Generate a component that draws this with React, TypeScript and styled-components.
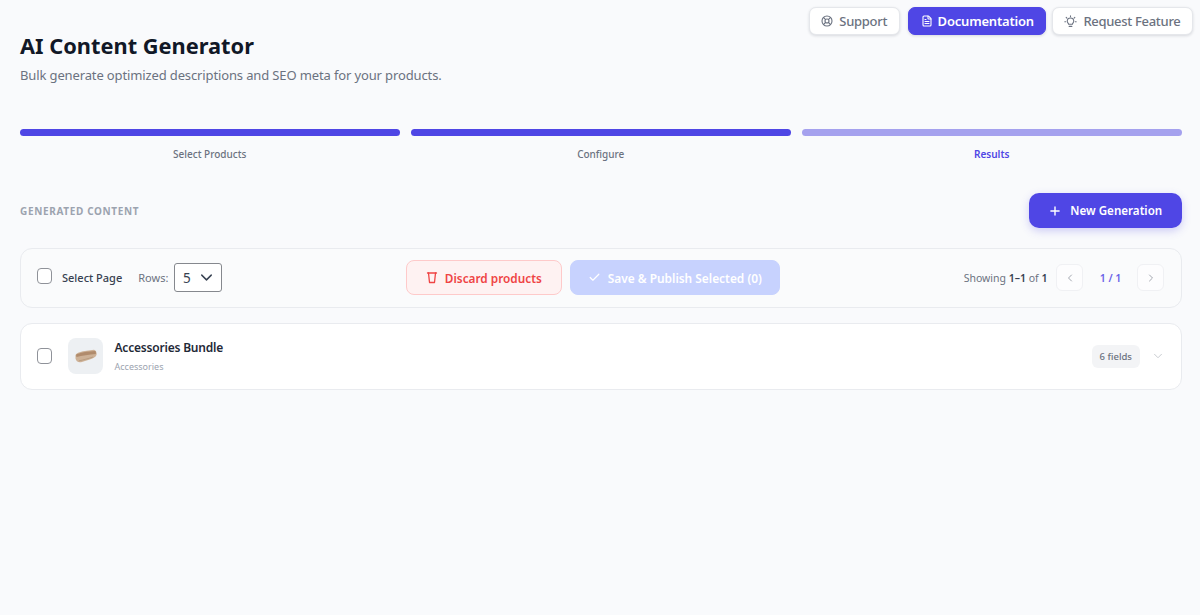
import styled, { createGlobalStyle } from 'styled-components';
import { Check, ChevronDown, ChevronLeft, ChevronRight, FileText, LifeBuoy, Plus } from 'lucide-react';

const STEPS = [
  { label: 'Select Products', state: 'done' },
  { label: 'Configure', state: 'done' },
  { label: 'Results', state: 'current' },
];

const GlobalStyle = createGlobalStyle`
  html, body {
    margin: 0;
    padding: 0;
    background: #f9fafc;
    font-family: "Noto Sans", "Open Sans", sans-serif;
    color: #111827;
  }
  * {
    box-sizing: border-box;
  }
`;

const BulbIcon = () => (
  <svg width="13" height="13" viewBox="0 0 24 24" fill="none" stroke="currentColor" strokeWidth="2" strokeLinecap="round">
    <path d="M12 1.500v1.500M4 4.500l1.400 1.400M20 4.500l-1.400 1.400M1.500 12.500H3M21 12.500h1.500" />
    <path d="M8.500 17c0-1.600-2.500-2.600-2.500-5.500a6 6 0 0 1 12 0c0 2.900-2.500 3.900-2.500 5.500z" />
    <path d="M9.500 21h5" />
  </svg>
);

const BinIcon = () => (
  <svg width="12" height="13" viewBox="0 0 24 26" fill="none" stroke="currentColor" strokeWidth="2.600" strokeLinecap="round" strokeLinejoin="round">
    <path d="M3 4h18" />
    <path d="M5 4l2 19h10l2-19" />
  </svg>
);

const ProductPhoto = () => (
  <svg width="22" height="14" viewBox="0 0 22 14">
    <path d="M0.500 6 C1.500 4 4 3 8 2.200 L19 0.800 C21 1.500 22 3.500 21.500 6 C20.500 8.500 18 9.500 14 10.800 L6 13.200 C3 13.800 1 12 0.500 9.500z" fill="#cdb196" />
    <path d="M1 5.800 C4 3.800 12 2.400 20.500 2 C21 3 21 4 20.800 5 C14 5.500 7 6.500 1.500 8z" fill="#b08b6c" />
    <path d="M4 11.800 C8 11 13 9.800 18 8" stroke="#b79a7e" strokeWidth="0.900" fill="none" />
  </svg>
);

export default function App() {
  return (
    <Page>
      <GlobalStyle />
      <Header>
        <TitleBlock>
          <Title>AI Content Generator</Title>
          <Subtitle>Bulk generate optimized descriptions and SEO meta for your products.</Subtitle>
        </TitleBlock>
        <TopActions>
          <TopButton>
            <LifeBuoy size={12} strokeWidth={2.200} />
            Support
          </TopButton>
          <TopButton $primary>
            <FileText size={12} strokeWidth={2.200} />
            Documentation
          </TopButton>
          <TopButton>
            <BulbIcon />
            Request Feature
          </TopButton>
        </TopActions>
      </Header>

      <Stepper>
        {STEPS.map((step) => (
          <Step key={step.label}>
            <StepBar $current={step.state === 'current'} />
            <StepLabel $current={step.state === 'current'}>{step.label}</StepLabel>
          </Step>
        ))}
      </Stepper>

      <SectionHeader>
        <SectionTitle>GENERATED CONTENT</SectionTitle>
        <NewButton>
          <Plus size={14} strokeWidth={2.400} />
          New Generation
        </NewButton>
      </SectionHeader>

      <Toolbar>
        <ToolbarGroup>
          <PageCheckbox />
          <SelectPage>Select Page</SelectPage>
          <RowsLabel>Rows:</RowsLabel>
          <RowsSelect>
            5
            <ChevronDown size={19} strokeWidth={1.800} />
          </RowsSelect>
        </ToolbarGroup>
        <ToolbarActions>
          <DiscardButton>
            <BinIcon />
            Discard products
          </DiscardButton>
          <SaveButton>
            <Check size={13} strokeWidth={2.200} />
            Save &amp; Publish Selected (0)
          </SaveButton>
        </ToolbarActions>
        <ToolbarGroup>
          <Showing>
            Showing <b>1–1</b> of <b>1</b>
          </Showing>
          <PageButton>
            <ChevronLeft size={12} />
          </PageButton>
          <PageNumber>1 / 1</PageNumber>
          <PageButton>
            <ChevronRight size={12} />
          </PageButton>
        </ToolbarGroup>
      </Toolbar>

      <ProductCard>
        <Checkbox />
        <Thumb>
          <ProductPhoto />
        </Thumb>
        <ProductInfo>
          <ProductName>Accessories Bundle</ProductName>
          <ProductCategory>Accessories</ProductCategory>
        </ProductInfo>
        <FieldsBadge>6 fields</FieldsBadge>
        <Expand>
          <ChevronDown size={14} strokeWidth={1.600} />
        </Expand>
      </ProductCard>
    </Page>
  );
}

const Page = styled.div`
  width: 1200px;
  height: 615px;
  padding: 0 18.5px 0 20px;
  background: #f9fafc;
  overflow: hidden;
`;

const Header = styled.header`
  display: flex;
  justify-content: space-between;
  align-items: flex-start;
  height: 129px;
`;

const TitleBlock = styled.div`
  padding-top: 30.500px;
`;

const Title = styled.h1`
  margin: 0;
  font-size: 21.800px;
  line-height: 30px;
  font-weight: 700;
  color: #111827;
`;

const Subtitle = styled.p`
  margin: 5px 0 0;
  font-size: 13px;
  line-height: 18px;
  letter-spacing: -0.130px;
  color: #6b7280;
`;

const TopActions = styled.div`
  display: flex;
  gap: 5.500px;
  margin: 7px -11.500px 0 0;
`;

const TopButton = styled.button<{ $primary?: boolean }>`
  display: flex;
  align-items: center;
  justify-content: center;
  gap: ${(p) => (p.$primary ? '5px' : '6px')};
  height: 28px;
  padding: 0 11.500px;
  border-radius: 7px;
  border: 1px solid ${(p) => (p.$primary ? '#4f46e5' : '#e5e7eb')};
  background: ${(p) => (p.$primary ? '#4f46e5' : '#ffffff')};
  color: ${(p) => (p.$primary ? '#ffffff' : '#6b7280')};
  box-shadow: 0 1px 3px rgba(17, 24, 39, 0.14);
  font-family: inherit;
  font-size: 13px;
  letter-spacing: ${(p) => (p.$primary ? '-0.200px' : '-0.300px')};
  font-weight: ${(p) => (p.$primary ? 600 : 500)};

  &:first-child {
    margin-right: 3px;
  }
`;

const Stepper = styled.div`
  display: grid;
  grid-template-columns: repeat(3, 1fr);
  gap: 11.500px;
`;

const Step = styled.div`
  display: flex;
  flex-direction: column;
  align-items: center;
`;

const StepBar = styled.div<{ $current?: boolean }>`
  width: 100%;
  height: 7px;
  border-radius: 4px;
  background: ${(p) => (p.$current ? '#a5a1ee' : '#4f46e5')};
`;

const StepLabel = styled.span<{ $current?: boolean }>`
  margin-top: 11px;
  font-size: 10px;
  line-height: 14px;
  font-weight: ${(p) => (p.$current ? 600 : 500)};
  color: ${(p) => (p.$current ? '#4f46e5' : '#6b7280')};
`;

const SectionHeader = styled.div`
  display: flex;
  justify-content: space-between;
  align-items: center;
  margin: 32px 0 20px;
`;

const SectionTitle = styled.h2`
  margin: 0;
  font-size: 10px;
  font-weight: 700;
  letter-spacing: 0.650px;
  color: #9ca3af;
`;

const NewButton = styled.button`
  display: flex;
  align-items: center;
  justify-content: center;
  gap: 8px;
  width: 152.500px;
  height: 35px;
  border: none;
  border-radius: 10px;
  background: #4f46e5;
  color: #ffffff;
  box-shadow: 0 3px 8px rgba(79, 70, 229, 0.25);
  font-family: inherit;
  font-size: 11.600px;
  font-weight: 600;
`;

const Toolbar = styled.div`
  display: flex;
  justify-content: space-between;
  align-items: center;
  height: 59.500px;
  padding: 0 16px;
  border: 1px solid #e9ebef;
  border-radius: 12px;
  background: #fafbfc;
`;

const ToolbarGroup = styled.div`
  display: flex;
  align-items: center;
`;

const ToolbarActions = styled.div`
  display: flex;
  align-items: center;
  gap: 8px;
`;

const Checkbox = styled.span`
  flex: none;
  width: 15px;
  height: 16px;
  border: 1px solid #8f9299;
  border-radius: 4px;
  background: #ffffff;
`;

const PageCheckbox = styled(Checkbox)`
  margin-top: -4px;
`;

const SelectPage = styled.span`
  margin-left: 10px;
  font-size: 11px;
  font-weight: 500;
  color: #374151;
`;

const RowsLabel = styled.span`
  margin-left: 16px;
  font-size: 11px;
  color: #6b7280;
`;

const RowsSelect = styled.div`
  display: flex;
  align-items: center;
  justify-content: space-between;
  width: 48px;
  height: 29px;
  margin-left: 5.500px;
  padding: 0 5px 0 8px;
  border: 1px solid #85888e;
  border-radius: 3px;
  background: #ffffff;
  font-size: 13.500px;
  color: #374151;
`;

const DiscardButton = styled.button`
  display: flex;
  align-items: center;
  justify-content: center;
  gap: 7px;
  width: 156px;
  height: 35px;
  border: 1px solid #fecaca;
  border-radius: 8px;
  background: #fef2f2;
  color: #ef4444;
  font-family: inherit;
  font-size: 11.800px;
  font-weight: 600;
`;

const SaveButton = styled.button`
  display: flex;
  align-items: center;
  justify-content: center;
  gap: 7px;
  width: 210px;
  height: 35px;
  border: 1px solid #c7d2fe;
  border-radius: 8px;
  background: #c7d2fe;
  color: #ffffff;
  font-family: inherit;
  font-size: 11.900px;
  font-weight: 600;
`;

const Showing = styled.span`
  margin-right: 9px;
  font-size: 10.500px;
  color: #6b7280;

  b {
    font-weight: 600;
    color: #374151;
  }
`;

const PageButton = styled.button`
  display: flex;
  align-items: center;
  justify-content: center;
  width: 27px;
  height: 27px;
  padding: 0;
  border: 1px solid #f0f1f4;
  border-radius: 6px;
  background: #fdfdfe;
  color: #a3a7b0;
`;

const PageNumber = styled.span`
  width: 54px;
  text-align: center;
  font-size: 10.500px;
  font-weight: 600;
  color: #6a63e8;
`;

const ProductCard = styled.div`
  display: flex;
  align-items: center;
  height: 66.500px;
  margin-top: 15.500px;
  padding: 0 16px 0 16px;
  border: 1px solid #e9ebef;
  border-radius: 12px;
  background: #ffffff;
`;

const Thumb = styled.div`
  display: flex;
  align-items: center;
  justify-content: center;
  flex: none;
  width: 35px;
  height: 36px;
  margin-left: 16px;
  border-radius: 8px;
  background: #edf0f3;
`;

const ProductInfo = styled.div`
  flex: 1;
  margin-left: 11.500px;
`;

const ProductName = styled.div`
  font-size: 12px;
  line-height: 18px;
  letter-spacing: -0.200px;
  font-weight: 600;
  color: #1f2937;
`;

const ProductCategory = styled.div`
  margin-top: 3px;
  font-size: 9px;
  line-height: 14px;
  color: #9ca3af;
`;

const FieldsBadge = styled.span`
  padding: 5px 7.500px;
  border-radius: 6px;
  background: #f3f4f6;
  font-size: 9.500px;
  line-height: 13.500px;
  font-weight: 500;
  color: #6b7280;
`;

const Expand = styled.span`
  display: flex;
  margin-left: 11px;
  color: #c5c8ce;
`;
